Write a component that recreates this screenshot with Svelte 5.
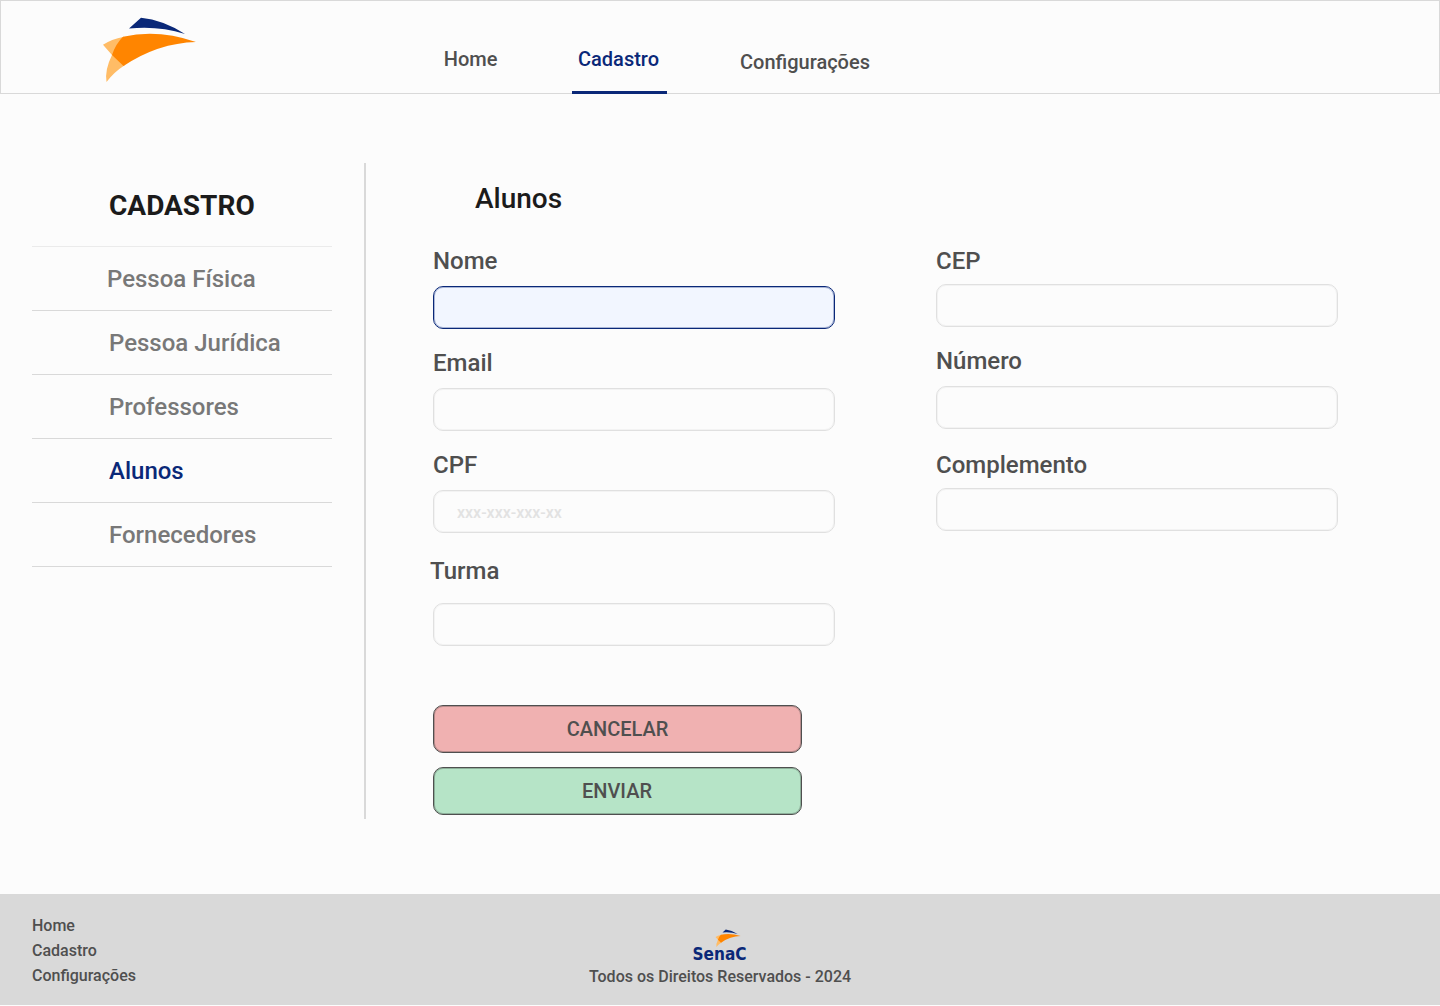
<script>
  const menu = ['Pessoa Física', 'Pessoa Jurídica', 'Professores', 'Alunos', 'Fornecedores'];
  const links = ['Home', 'Cadastro', 'Configurações'];
</script>

{#snippet star()}
  <path class="navy" d="M129 28.6 L141 17.800 Q163 20 185 34 Q158 25.500 129 28.600Z" />
  <path class="pale" d="M103 44.800 Q111 39.500 124 36.800 L125 65 Q114 72 106.500 82 Q104.500 70 112 55Z" />
  <path class="orange" d="M123 36.800 Q158 28.800 196 42 Q158 43 123.500 66 L112 55 Q116 43.500 123 36.800Z" />
{/snippet}

<div class="page">
  <header>
    <svg class="logo" viewBox="100 14 100 72" role="img" aria-label="Senac">{@render star()}</svg>
    <nav>
      <a class="home" href="#home">Home</a>
      <a class="current" href="#cadastro">Cadastro</a>
      <a class="config" href="#config">Configurações</a>
    </nav>
  </header>

  <main>
    <aside>
      <h1>CADASTRO</h1>
      <ul>
        {#each menu as item, i}
          <li class:active={item === 'Alunos'} class:first={i === 0}>{item}</li>
        {/each}
      </ul>
    </aside>

    <section>
      <h2>Alunos</h2>
      <form>
        <div class="column">
          <label for="nome">Nome</label>
          <input id="nome" class="focused" />
          <label for="email">Email</label>
          <input id="email" />
          <label for="cpf">CPF</label>
          <input id="cpf" placeholder="xxx-xxx-xxx-xx" />
          <label class="turma" for="turma">Turma</label>
          <input id="turma" />
          <button class="cancel" type="button">CANCELAR</button>
          <button class="send" type="button">ENVIAR</button>
        </div>
        <div class="column right">
          <label for="cep">CEP</label>
          <input id="cep" />
          <label class="numero" for="numero">Número</label>
          <input id="numero" />
          <label class="complemento" for="complemento">Complemento</label>
          <input id="complemento" />
        </div>
      </form>
    </section>
  </main>

  <footer>
    <div class="footer-links">
      {#each links as link}<a href="#footer">{link}</a>{/each}
    </div>
    <div class="legal">
      <svg class="senac" viewBox="0 0 54 34" role="img" aria-label="Senac">
        <g transform="translate(-5.300 -4.300) scale(.27 .272)">{@render star()}</g>
        <text class="wordmark" x="-0.500" y="31" textLength="54" lengthAdjust="spacingAndGlyphs">SenaC</text>
      </svg>
      <p>Todos os Direitos Reservados - 2024</p>
    </div>
  </footer>
</div>

<style>
  :global(body) {
    margin: 0;
    background: #fcfcfc;
  }
  * {
    box-sizing: border-box;
  }
  .page {
    height: 1006px;
    display: flex;
    flex-direction: column;
    overflow: hidden;
    font-family: Roboto, sans-serif;
    font-weight: 500;
    color: #4f4f4f;
    background: #fcfcfc;
  }
  a {
    color: inherit;
    text-decoration: none;
  }
  h1, h2, ul, p {
    margin: 0;
    padding: 0;
  }

  header {
    height: 94px;
    flex: none;
    display: flex;
    border: 1px solid #d9d9d9;
  }
  .logo {
    width: 100px;
    height: 72px;
    margin: 13px 0 0 99px;
    flex: none;
  }
  .navy { fill: #0a2878; }
  .pale { fill: #ffbc66; }
  .orange { fill: #ff8500; }
  nav {
    display: flex;
    margin: 0 0 -1px 243px;
    font-size: 20px;
    line-height: 24px;
  }
  nav a {
    padding-top: 46px;
  }
  .home {
    width: 129px;
    padding-left: 0.8px;
  }
  .current {
    width: 95px;
    padding-left: 6px;
    color: #0a2878;
    border-bottom: 3px solid #0a2878;
  }
  .config {
    padding-top: 49px;
    margin-left: 73px;
  }

  main {
    flex: none;
    height: 800px;
    display: flex;
    padding: 69px 0 75px 32px;
  }
  aside {
    width: 334px;
    padding-right: 32px;
    border-right: 2px solid #d9d9d9;
  }
  h1 {
    height: 83px;
    padding: 27px 0 0 77px;
    font-size: 28px;
    line-height: 32px;
    font-weight: 700;
    color: #1b1b1b;
  }
  ul {
    list-style: none;
  }
  li {
    height: 64px;
    padding-left: 77px;
    border-bottom: 1px solid #d9d9d9;
    font-size: 24px;
    line-height: 64px;
    color: #787878;
  }
  .first {
    height: 65px;
    padding-left: 75px;
    border-top: 1px solid #ebebeb;
  }
  .active { color: #0a2878; }

  section {
    padding: 19px 0 0 67px;
  }
  h2 {
    height: 65px;
    padding-left: 42px;
    font-size: 28px;
    line-height: 33px;
    font-weight: 500;
    color: #1b1b1b;
  }
  form {
    display: flex;
    gap: 101px;
  }
  .column {
    width: 402px;
    display: flex;
    flex-direction: column;
  }
  label {
    height: 28px;
    margin: 0 0 11px;
    font-size: 24px;
    line-height: 28px;
  }
  input {
    width: 402px;
    height: 43px;
    margin: 0 0 20px;
    padding: 2px 23px 0;
    border: 1px solid #e0e0e0;
    border-radius: 10px;
    box-shadow: inset 0 0 0 1px #f3f3f3;
    background: transparent;
    font: 500 16px Roboto, sans-serif;
    outline: none;
  }
  input::placeholder {
    color: #e2e2e2;
    opacity: 1;
  }
  .focused {
    border-color: #0a2878;
    box-shadow: inset 0 0 0 1px #aab6d6;
    background: #f2f6ff;
  }
  .turma {
    margin: 4px 0 18px -3px;
  }
  .right label { margin-bottom: 9px; }
  .right .numero { margin-bottom: 11px; }
  .right .complemento { margin-top: 2px; }
  button {
    width: 369px;
    height: 48px;
    padding: 0;
    border: 1px solid #4f4f4f;
    border-radius: 10px;
    font: 500 20px/24px Roboto, sans-serif;
    color: #4f4f4f;
  }
  .cancel {
    margin: 39px 0 14px;
    background: #f0b1b1;
    box-shadow: inset 0 0 0 1px #b88c8c;
  }
  .send {
    padding-right: 1px;
    background: #b6e4c7;
    box-shadow: inset 0 0 0 1px #8db09a;
  }

  footer {
    height: 111px;
    flex: none;
    display: grid;
    grid-template-columns: 1fr auto 1fr;
    padding: 0 32px;
    background: #d9d9d9;
    font-size: 16px;
  }
  .footer-links {
    display: flex;
    flex-direction: column;
    padding-top: 19px;
    line-height: 25px;
  }
  .legal {
    display: flex;
    flex-direction: column;
    align-items: center;
    padding-top: 35px;
  }
  .senac {
    width: 54px;
    height: 34px;
    overflow: visible;
  }
  .wordmark {
    font: 700 17px "DejaVu Sans", sans-serif;
    fill: #0a2878;
  }
  .legal p {
    margin-top: 4px;
    line-height: 19px;
  }
</style>
